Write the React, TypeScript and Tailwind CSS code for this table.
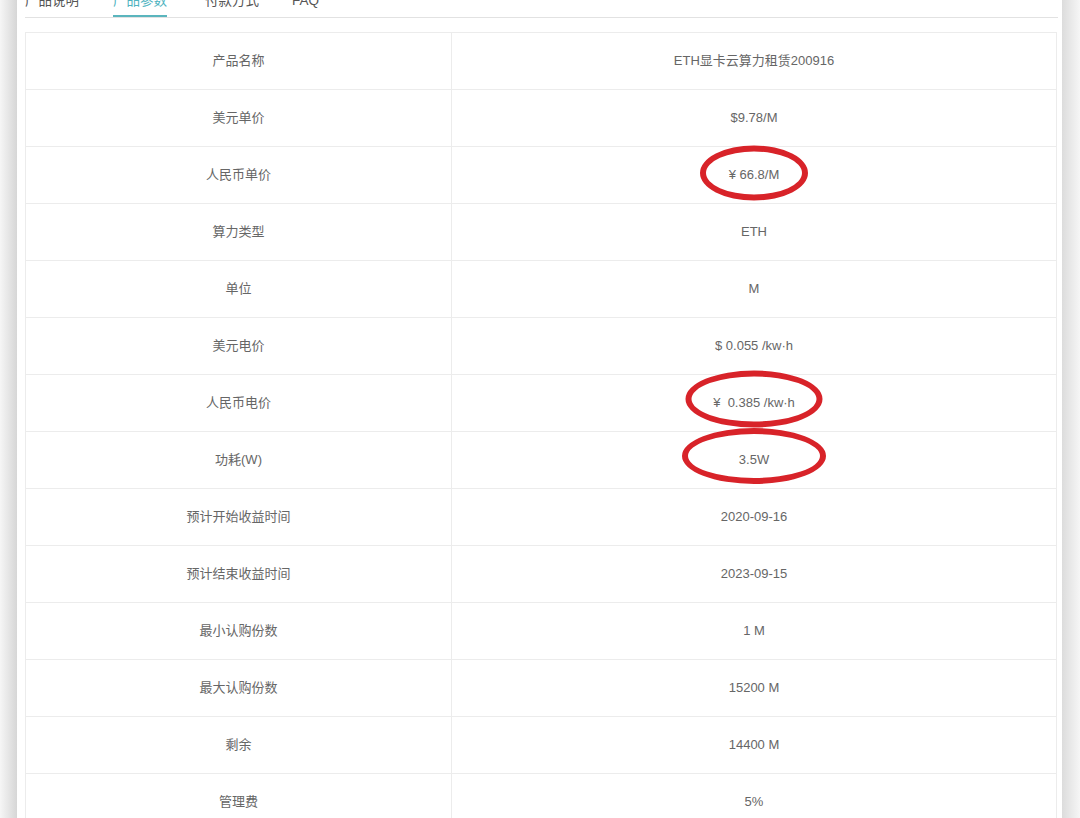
import React from 'react';

type Row = { label: string; value: string; mark?: { w: number; h: number; dy: number } };

const rows: Row[] = [
  { label: '产品名称', value: 'ETH显卡云算力租赁200916' },
  { label: '美元单价', value: '$9.78/M' },
  { label: '人民币单价', value: '¥ 66.8/M', mark: { w: 108, h: 55, dy: -2 } },
  { label: '算力类型', value: 'ETH' },
  { label: '单位', value: 'M' },
  { label: '美元电价', value: '$ 0.055 /kw·h' },
  { label: '人民币电价', value: '¥  0.385 /kw·h', mark: { w: 137, h: 57, dy: -4 } },
  { label: '功耗(W)', value: '3.5W', mark: { w: 144, h: 56, dy: -4 } },
  { label: '预计开始收益时间', value: '2020-09-16' },
  { label: '预计结束收益时间', value: '2023-09-15' },
  { label: '最小认购份数', value: '1 M' },
  { label: '最大认购份数', value: '15200 M' },
  { label: '剩余', value: '14400 M' },
  { label: '管理费', value: '5%' },
];

const tabs = [
  { label: '产品说明', cls: '' },
  { label: '产品参数', cls: 'ml-[34px]' },
  { label: '付款方式', cls: 'ml-[38px]' },
  { label: 'FAQ', cls: 'ml-[33px]' },
];

export default function App() {
  return (
    <div
      className="w-[1080px] h-[818px] overflow-hidden flex bg-white"
      style={{ fontFamily: '"Liberation Sans", "Noto Sans CJK SC", sans-serif' }}
    >
      {/* page shadow, left */}
      <div className="w-[17px] shrink-0 bg-gradient-to-r from-[#f6f6f6] to-[#d6d6d6]" />

      <div className="flex-1 pl-[8px] pr-[4px]">
        {/* Tabs */}
        <div className="-mt-[23px] flex border-b border-[#e2e2e2] pr-[1px]">
          {tabs.map((t, i) => (
            <div
              key={t.label}
              className={`h-[40px] flex items-end pb-[4px] leading-[20px] text-[13.5px] border-b-2 ${t.cls} ${
                i === 1 ? 'text-[#4fb3bf] border-[#5ab5bd]' : 'text-[#555] border-transparent'
              }`}
            >
              {t.label}
            </div>
          ))}
        </div>

        {/* Param table */}
        <div className="mt-[14px] mr-[1px] border border-[#ececec]">
          {rows.map((r) => (
            <div key={r.label} className="flex h-[57px] border-b border-[#ececec] text-[13px] text-[#666]">
              <div className="w-[426px] shrink-0 flex items-center justify-center border-r border-[#ececec]">
                {r.label}
              </div>
              <div className="flex-1 flex items-center justify-center">
                <span className="relative whitespace-pre">
                  {r.value}
                  {r.mark && (
                    <span
                      className="absolute left-1/2 top-1/2 rounded-[50%] border-[6px] border-[#d82329]"
                      style={{
                        width: r.mark.w,
                        height: r.mark.h,
                        transform: `translate(-50%, calc(-50% + ${r.mark.dy}px))`,
                      }}
                    />
                  )}
                </span>
              </div>
            </div>
          ))}
        </div>
      </div>

      {/* page shadow, right */}
      <div className="w-[18px] shrink-0 bg-gradient-to-r from-[#dcdcdc] to-[#f6f6f6]" />
    </div>
  );
}
